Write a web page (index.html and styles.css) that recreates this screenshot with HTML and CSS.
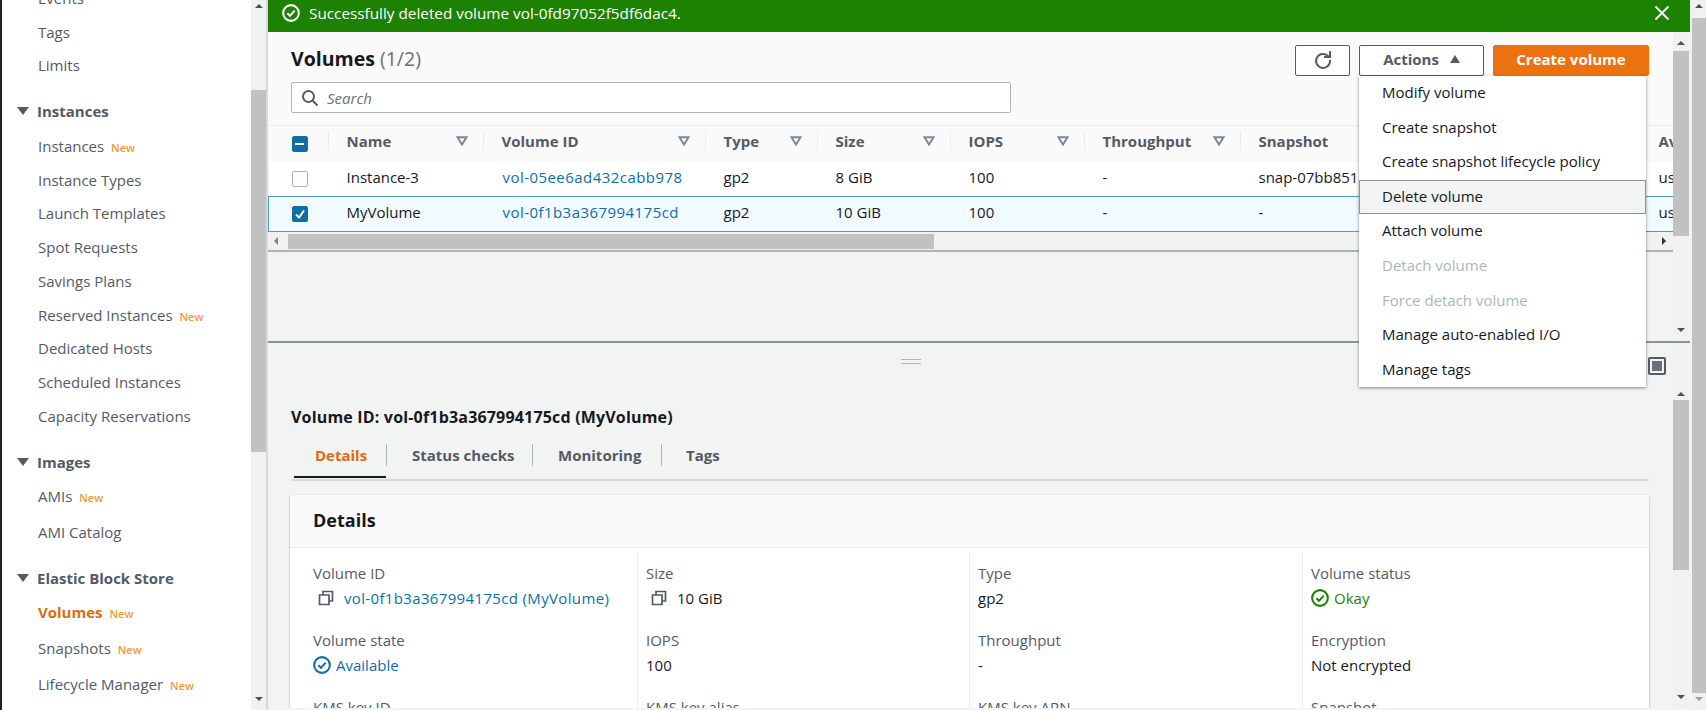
FILE: index.html
```html
<!DOCTYPE html>
<html lang="en">
<head>
    <meta charset="UTF-8">
    <title>Volumes | EC2 Management Console</title>
    <link rel="stylesheet" href="styles.css">
</head>
<body>

<svg class="defs" width="0" height="0">
    <symbol id="i-check" viewBox="0 0 16 16">
        <circle cx="8" cy="8" r="7" fill="none" stroke="currentColor" stroke-width="1.8"/>
        <path d="M4.8 8.2l2.3 2.3 4.2-4.6" fill="none" stroke="currentColor" stroke-width="1.8"/>
    </symbol>
    <symbol id="i-copy" viewBox="0 0 16 16">
        <path d="M1.5 5h9.500v9.500h-9.500z M5 5v-3.500h9.500v9.500h-3.500" fill="none" stroke="currentColor" stroke-width="1.700"/>
    </symbol>
    <symbol id="i-sort" viewBox="0 0 12 10">
        <path d="M1.500 1.200h9l-4.500 7.300z" fill="none" stroke="currentColor" stroke-width="2"/>
    </symbol>
</svg>

<div class="app">
    <div class="edge"></div>

    <nav class="sidebar">
        <ul class="nav-list nav-top">
            <li>Events</li>
            <li>Tags</li>
            <li>Limits</li>
        </ul>
        <h4 class="nav-head nav-first"><span class="caret"></span>Instances</h4>
        <ul class="nav-list nav-instances">
            <li>Instances <span class="new">New</span></li>
            <li>Instance Types</li>
            <li>Launch Templates</li>
            <li>Spot Requests</li>
            <li>Savings Plans</li>
            <li>Reserved Instances <span class="new">New</span></li>
            <li>Dedicated Hosts</li>
            <li>Scheduled Instances</li>
            <li>Capacity Reservations</li>
        </ul>
        <h4 class="nav-head"><span class="caret"></span>Images</h4>
        <ul class="nav-list nav-tall">
            <li>AMIs <span class="new">New</span></li>
            <li>AMI Catalog</li>
        </ul>
        <h4 class="nav-head nav-ebs"><span class="caret"></span>Elastic Block Store</h4>
        <ul class="nav-list nav-tall">
            <li class="active">Volumes <span class="new">New</span></li>
            <li>Snapshots <span class="new">New</span></li>
            <li>Lifecycle Manager <span class="new">New</span></li>
        </ul>
    </nav>

    <div class="scrollbar side-scroll">
        <span class="arrow up"></span>
        <span class="thumb"></span>
        <span class="arrow down"></span>
    </div>

    <main class="main">
        <div class="flash">
            <svg class="flash-icon"><use href="#i-check"/></svg>
            <span class="flash-text">Successfully deleted volume vol-0fd97052f5df6dac4.</span>
            <svg class="flash-close" viewBox="0 0 16 16"><path d="M1.500 1.500l13 13M14.500 1.500l-13 13" stroke="currentColor" stroke-width="1.800"/></svg>
        </div>

        <section class="pane upper">
            <div class="pane-body">
                <div class="list-head">
                    <div class="title-row">
                        <h2 class="list-title">Volumes <span class="count">(1/2)</span></h2>
                        <div class="list-actions">
                            <button class="btn btn-icon">
                                <svg width="20" height="20" viewBox="0 0 20 20"><path d="M15.500 6.500A7 7 0 1 0 17 10" fill="none" stroke="currentColor" stroke-width="2"/><path d="M11 7h6V1" fill="none" stroke="currentColor" stroke-width="2"/></svg>
                            </button>
                            <button class="btn btn-actions">Actions <span class="caret-up"></span></button>
                            <button class="btn btn-primary">Create volume</button>
                            <ul class="menu">
                                <li>Modify volume</li>
                                <li>Create snapshot</li>
                                <li>Create snapshot lifecycle policy</li>
                                <li class="hover">Delete volume</li>
                                <li>Attach volume</li>
                                <li class="disabled">Detach volume</li>
                                <li class="disabled">Force detach volume</li>
                                <li>Manage auto-enabled I/O</li>
                                <li>Manage tags</li>
                            </ul>
                        </div>
                    </div>
                    <div class="search">
                        <svg width="18" height="18" viewBox="0 0 18 18"><circle cx="7.500" cy="7.500" r="5.500" fill="none" stroke="currentColor" stroke-width="2"/><path d="M11.500 11.500l5 5" stroke="currentColor" stroke-width="2"/></svg>
                        <span>Search</span>
                    </div>
                </div>

                <div class="table-wrap">
                    <table class="volumes">
                        <colgroup>
                            <col class="c-check"><col class="c-name"><col class="c-id"><col class="c-type">
                            <col class="c-size"><col class="c-iops"><col class="c-through"><col class="c-snap"><col class="c-az">
                        </colgroup>
                        <thead>
                            <tr>
                                <th><span class="box box-on"><span class="dash"></span></span></th>
                                <th><div class="th-in">Name<svg class="sort"><use href="#i-sort"/></svg></div></th>
                                <th><div class="th-in">Volume ID<svg class="sort"><use href="#i-sort"/></svg></div></th>
                                <th><div class="th-in">Type<svg class="sort"><use href="#i-sort"/></svg></div></th>
                                <th><div class="th-in">Size<svg class="sort"><use href="#i-sort"/></svg></div></th>
                                <th><div class="th-in">IOPS<svg class="sort"><use href="#i-sort"/></svg></div></th>
                                <th><div class="th-in">Throughput<svg class="sort"><use href="#i-sort"/></svg></div></th>
                                <th><div class="th-in">Snapshot</div></th>
                                <th><div class="th-in">Availability</div></th>
                            </tr>
                        </thead>
                        <tbody>
                            <tr>
                                <td><span class="box"></span></td>
                                <td>Instance-3</td>
                                <td><a class="link table-link">vol-05ee6ad432cabb978</a></td>
                                <td>gp2</td>
                                <td>8 GiB</td>
                                <td>100</td>
                                <td>-</td>
                                <td>snap-07bb851a6d2e0c4f</td>
                                <td>us-east-1a</td>
                            </tr>
                            <tr class="selected">
                                <td><span class="box box-on"><svg width="12" height="12" viewBox="0 0 12 12"><path d="M2 6.500l3 3 5-7" fill="none" stroke="#fff" stroke-width="2"/></svg></span></td>
                                <td>MyVolume</td>
                                <td><a class="link table-link">vol-0f1b3a367994175cd</a></td>
                                <td>gp2</td>
                                <td>10 GiB</td>
                                <td>100</td>
                                <td>-</td>
                                <td>-</td>
                                <td>us-east-1a</td>
                            </tr>
                        </tbody>
                    </table>
                    <div class="hscroll">
                        <span class="arrow left"></span>
                        <span class="hthumb"></span>
                        <span class="arrow right"></span>
                    </div>
                </div>
            </div>
            <div class="scrollbar inner-scroll">
                <span class="arrow up"></span>
                <span class="thumb"></span>
                <span class="arrow down"></span>
            </div>
        </section>

        <section class="pane lower">
            <div class="pane-body">
                <div class="splitter">
                    <span class="grip"></span>
                    <span class="panel-toggle"></span>
                </div>
                <h3 class="detail-title">Volume ID: vol-0f1b3a367994175cd (MyVolume)</h3>
                <div class="tabs">
                    <span class="tab active">Details</span>
                    <span class="tab">Status checks</span>
                    <span class="tab">Monitoring</span>
                    <span class="tab">Tags</span>
                </div>
                <div class="card">
                    <h3 class="card-title">Details</h3>
                    <div class="grid">
                        <div class="col">
                            <div class="field"><label>Volume ID</label><p class="indent"><svg class="copy"><use href="#i-copy"/></svg><a class="link">vol-0f1b3a367994175cd (MyVolume)</a></p></div>
                            <div class="field"><label>Volume state</label><p class="status blue"><svg class="st"><use href="#i-check"/></svg>Available</p></div>
                            <div class="field"><label>KMS key ID</label></div>
                        </div>
                        <div class="col">
                            <div class="field"><label>Size</label><p class="indent"><svg class="copy"><use href="#i-copy"/></svg>10 GiB</p></div>
                            <div class="field"><label>IOPS</label><p>100</p></div>
                            <div class="field"><label>KMS key alias</label></div>
                        </div>
                        <div class="col">
                            <div class="field"><label>Type</label><p>gp2</p></div>
                            <div class="field"><label>Throughput</label><p>-</p></div>
                            <div class="field"><label>KMS key ARN</label></div>
                        </div>
                        <div class="col">
                            <div class="field"><label>Volume status</label><p class="status green"><svg class="st"><use href="#i-check"/></svg>Okay</p></div>
                            <div class="field"><label>Encryption</label><p>Not encrypted</p></div>
                            <div class="field"><label>Snapshot</label></div>
                        </div>
                    </div>
                </div>
            </div>
            <div class="scrollbar inner-scroll lower-scroll">
                <span class="arrow up"></span>
                <span class="thumb"></span>
                <span class="arrow down"></span>
            </div>
        </section>
    </main>

    <div class="scrollbar outer-scroll">
        <span class="arrow up"></span>
        <span class="thumb"></span>
        <span class="arrow down"></span>
    </div>
</div>

</body>
</html>
```

FILE: styles.css
```css
* {
    box-sizing: border-box;
}

html, body {
    margin: 0;
    height: 710px;
    overflow: hidden;
}

body {
    font-family: "Open Sans", "Noto Sans", Arial, sans-serif;
    font-size: 15px;
    color: #16191f;
    background: #f2f3f3;
}

.defs {
    position: absolute;
}

h2, h3, h4, p, ul {
    margin: 0;
    padding: 0;
}

ul {
    list-style: none;
}

.app {
    display: flex;
    height: 710px;
}

.edge {
    width: 2px;
    background: #222;
}

/* barra lateral */
.sidebar {
    width: 249px;
    height: 710px;
    overflow: hidden;
    background: #fff;
    color: #545b64;
}

.nav-list li {
    height: 33.7px;
    line-height: 33.7px;
    padding-left: 36px;
    white-space: nowrap;
}

.nav-tall li {
    height: 35.6px;
    line-height: 35.6px;
}

.nav-top {
    margin-top: -18px;
}

.nav-instances {
    margin-top: 2px;
}

.nav-head {
    display: flex;
    align-items: center;
    height: 34px;
    margin-top: 12px;
    padding-left: 15px;
    font-size: 15px;
    font-weight: 700;
}

.nav-first {
    margin-top: 11px;
}

.nav-ebs {
    margin-top: 11px;
}

.caret {
    width: 0;
    height: 0;
    margin-right: 8px;
    border-left: 6px solid transparent;
    border-right: 6px solid transparent;
    border-top: 8px solid #545b64;
}

.new {
    margin-left: 3px;
    font-size: 11px;
    font-weight: 600;
    color: #f09a35;
}

.active {
    color: #dd6b10;
    font-weight: 700;
}

/* barras de rolagem */
.scrollbar {
    display: flex;
    flex-direction: column;
    align-items: center;
    background: #f1f1f1;
}

.thumb {
    width: 100%;
    background: #c1c1c1;
}

.arrow {
    width: 0;
    height: 0;
    flex: none;
}

.arrow.up {
    margin-top: 4px;
    border-left: 4px solid transparent;
    border-right: 4px solid transparent;
    border-bottom: 4px solid #505050;
}

.arrow.down {
    margin-top: auto;
    margin-bottom: 9px;
    border-left: 4px solid transparent;
    border-right: 4px solid transparent;
    border-top: 4px solid #505050;
}

.side-scroll {
    width: 17px;
    border-right: 2px solid #d5dbdb;
}

.side-scroll .thumb {
    margin-top: 82px;
    height: 362px;
}

.outer-scroll {
    width: 14px;
    margin-left: 2px;
}

.outer-scroll .thumb {
    margin-top: 10px;
    height: 675px;
}

.outer-scroll .arrow.down {
    border-top-color: #a0a0a0;
}

.main {
    flex: 1;
    min-width: 0;
    display: flex;
    flex-direction: column;
    height: 708px;
}

/* aviso verde */
.flash {
    display: flex;
    align-items: center;
    flex: none;
    height: 32px;
    padding: 0 20px 6px 14px;
    background: #1d8102;
    color: #fff;
}

.flash-icon {
    width: 18px;
    height: 18px;
}

.flash-text {
    margin-left: 9px;
    font-size: 15.300px;
}

.flash-close {
    width: 16px;
    height: 16px;
    margin-left: auto;
}

.pane {
    display: flex;
}

.pane-body {
    flex: 1;
    min-width: 0;
}

.inner-scroll {
    flex: none;
    width: 16px;
    margin-right: 1px;
}

.upper {
    flex: none;
    height: 311px;
    border-bottom: 2px solid #8d9393;
}

.upper .inner-scroll .thumb {
    margin-top: 6px;
    height: 185px;
}

.upper .arrow.up {
    margin-top: 9px;
}

.lower {
    flex: 1;
    min-height: 0;
    overflow: hidden;
}

.lower-scroll .arrow.up {
    margin-top: 49px;
}

.lower-scroll .thumb {
    margin-top: 4px;
    height: 170px;
}

/* cabecalho da lista */
.list-head {
    height: 93px;
    padding: 13px 22px 0 23px;
    background: #fafafa;
}

.title-row {
    display: flex;
    justify-content: space-between;
    height: 31px;
}

.list-title {
    font-size: 19.500px;
    font-weight: 700;
    line-height: 27px;
}

.count {
    font-weight: 400;
    color: #687078;
}

.list-actions {
    position: relative;
    display: flex;
    gap: 9px;
    margin-right: 2px;
}

.btn {
    height: 31px;
    font: inherit;
    font-weight: 700;
    color: #545b64;
    background: #fff;
    border: 1px solid #545b64;
    border-radius: 2px;
    padding: 0 0 3px;
}

.btn-icon {
    width: 55px;
    padding-top: 3px;
    padding-bottom: 0;
}

.btn-actions {
    width: 125px;
}

.caret-up {
    display: inline-block;
    margin-left: 7px;
    vertical-align: 2px;
    border-left: 5px solid transparent;
    border-right: 5px solid transparent;
    border-bottom: 8px solid #545b64;
}

.btn-primary {
    width: 156px;
    color: #fff;
    background: #ec7211;
    border-color: #ec7211;
}

.menu {
    position: absolute;
    z-index: 5;
    top: 31px;
    left: 64px;
    width: 287px;
    background: #fff;
    color: #16191f;
    box-shadow: 0 1px 3px rgba(0, 28, 36, .5);
}

.menu li {
    height: 34.600px;
    line-height: 32px;
    padding-left: 23px;
    white-space: nowrap;
}

.menu .hover {
    background: #f2f3f3;
    outline: 1px solid #879596;
    outline-offset: -1px;
}

.menu .disabled {
    color: #aab7b8;
}

.search {
    display: flex;
    align-items: center;
    gap: 8px;
    width: 720px;
    height: 31px;
    margin-top: 6px;
    padding-left: 9px;
    background: #fff;
    border: 1px solid #aab7b8;
    border-radius: 2px;
    color: #545b64;
}

.search span {
    font-style: italic;
    color: #687078;
}

/* tabela */
.table-wrap {
    overflow: hidden;
    border-bottom: 2px solid #aab7b8;
}

.volumes {
    table-layout: fixed;
    width: 1500px;
    border-collapse: collapse;
}

.c-check { width: 59px; }
.c-name { width: 155px; }
.c-id { width: 222px; }
.c-type { width: 112px; }
.c-size { width: 133px; }
.c-iops { width: 134px; }
.c-through { width: 156px; }
.c-snap { width: 400px; }
.c-az { width: 129px; }

.volumes th {
    height: 36px;
    padding: 0 0 5px;
    background: #fafafa;
    border-top: 1px solid #eaeded;
    color: #545b64;
    text-align: left;
    font-weight: 700;
}

.th-in {
    display: flex;
    align-items: center;
    justify-content: space-between;
    height: 20px;
    padding: 0 15px 0 18px;
    border-left: 1px solid #eaeded;
}

.sort {
    width: 12px;
    height: 10px;
    color: #7d8998;
}

.volumes td {
    height: 35px;
    padding: 0 0 4px 19px;
    background: #fff;
    white-space: nowrap;
    overflow: hidden;
}

.volumes td:first-child,
.volumes th:first-child {
    padding: 0 0 0 23px;
}

.volumes .selected td {
    background: #f1faff;
    border-top: 1px solid #4f9fb0;
    border-bottom: 1px solid #4f9fb0;
}

.volumes .selected td:first-child {
    border-left: 1px solid #4f9fb0;
}

.box {
    display: flex;
    align-items: center;
    justify-content: center;
    width: 16px;
    height: 16px;
    background: #fff;
    border: 1px solid #aab7b8;
    border-radius: 2px;
}

.box-on {
    background: #0f6ea6;
    border-color: #0f6ea6;
}

.dash {
    width: 9px;
    height: 2px;
    background: #fff;
}

.link {
    color: #0f6ea6;
    letter-spacing: .35px;
}

.table-link {
    margin-left: 1px;
    letter-spacing: .45px;
}

.hscroll {
    display: flex;
    align-items: center;
    height: 18px;
    background: #f1f1f1;
}

.hthumb {
    width: 646px;
    height: 15px;
    margin-left: 10px;
    background: #c1c1c1;
}

.arrow.left {
    margin-top: 0;
    margin-left: 6px;
    border-top: 4px solid transparent;
    border-bottom: 4px solid transparent;
    border-right: 4px solid #808080;
}

.arrow.right {
    margin-left: auto;
    margin-right: 7px;
    border-top: 4px solid transparent;
    border-bottom: 4px solid transparent;
    border-left: 4px solid #303030;
}

/* painel de baixo */
.splitter {
    position: relative;
    display: flex;
    justify-content: center;
    align-items: center;
    height: 36px;
}

.grip {
    width: 20px;
    height: 5px;
    margin-right: 120px;
    border-top: 1px solid #aab7b8;
    border-bottom: 1px solid #aab7b8;
}

.panel-toggle {
    position: absolute;
    top: 14px;
    right: 7px;
    width: 18px;
    height: 18px;
    border: 2px solid #545b64;
    border-radius: 2px;
    box-shadow: inset 0 0 0 2px #f2f3f3;
    background: #687078;
}

.detail-title {
    margin: 27px 0 0 23px;
    font-size: 16px;
    line-height: 22px;
    font-weight: 700;
    letter-spacing: .18px;
}

.tabs {
    display: flex;
    align-items: flex-start;
    height: 43px;
    margin: 10px 24px 0 23px;
    padding-top: 6px;
    border-bottom: 2px solid #d5dbdb;
    color: #545b64;
    font-weight: 700;
}

.tab {
    height: 22px;
    line-height: 22px;
    padding-left: 25px;
    border-right: 1px solid #aab7b8;
    white-space: nowrap;
}

.tab:nth-child(1) {
    width: 93px;
    margin-left: 3px;
    padding-left: 21px;
}

.tab:nth-child(2) {
    width: 146px;
}

.tab:nth-child(3) {
    width: 129px;
}

.tab:last-child {
    padding-left: 24px;
    border-right: 0;
}

.tab.active {
    position: relative;
    color: #dd6b10;
}

.tab.active::after {
    content: "";
    position: absolute;
    left: 0;
    right: 0;
    top: 32px;
    height: 2px;
    background: #16191f;
}

.card {
    margin: 14px 24px 0 22px;
    height: 400px;
    background: #fff;
    box-shadow: 0 1px 2px rgba(0, 28, 36, .35);
}

.card-title {
    height: 53px;
    padding-left: 23px;
    font-size: 18px;
    line-height: 50px;
    font-weight: 700;
    background: #fafafa;
    border-bottom: 1px solid #eaeded;
}

.grid {
    display: grid;
    grid-template-columns: 347px 332px 333px 1fr;
    padding-top: 4px;
}

.col {
    padding-left: 23px;
    border-left: 1px solid #eaeded;
}

.col:first-child {
    border-left: 0;
}

.col:not(:first-child) {
    padding-left: 8px;
}

.field {
    height: 67px;
    padding-top: 9px;
}

.field label {
    display: block;
    line-height: 24px;
    color: #545b64;
}

.field p {
    line-height: 26px;
}

.indent {
    display: flex;
    align-items: center;
    padding-left: 5px;
}

.copy {
    width: 16px;
    height: 16px;
    margin-right: 10px;
    color: #545b64;
}

.status {
    display: flex;
    align-items: center;
    gap: 5px;
}

.st {
    width: 18px;
    height: 18px;
}

.blue { color: #0f6ea6; }
.green { color: #1d8102; }
```
